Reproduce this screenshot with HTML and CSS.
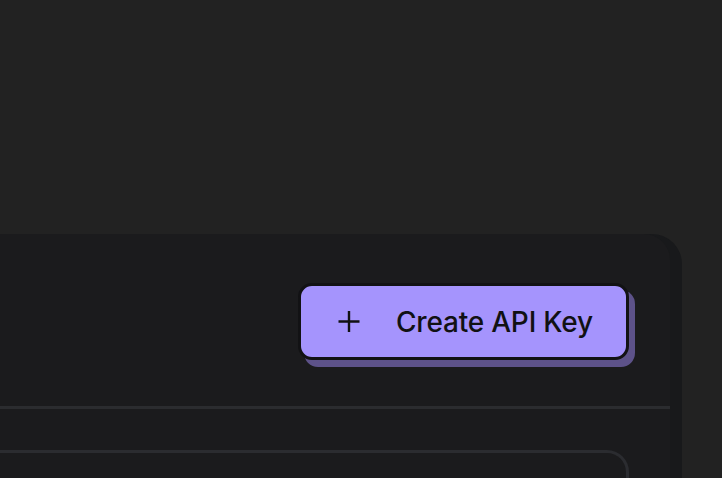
FILE: index.html
```html
<!DOCTYPE html>
<html>
<head>
<meta charset="utf-8">
<link rel="stylesheet" href="styles.css">
</head>
<body>
<div class="page">
  <div class="card">
    <div class="panel">
      <div class="header">
        <button class="create-btn">
          <svg class="plus" width="22" height="22" viewBox="0 0 22 22"><path d="M11 1V22M0.5 11.5H21.5" stroke="#111" stroke-width="2.4" fill="none"/></svg>
          <span class="label">Create API Key</span>
        </button>
      </div>
      <div class="divider"></div>
      <div class="list">
        <div class="list-box"></div>
      </div>
    </div>
  </div>
</div>
</body>
</html>
```
FILE: styles.css
```css
html, body {
  margin: 0;
  padding: 0;
  background: #222222;
  height: 100%;
  overflow: hidden;
}
.page {
  padding-top: 234px;
  font-family: Inter, "Noto Sans", sans-serif;
}
.card {
  margin-left: -60px;
  width: 742px;
  height: 244px;
  overflow: hidden;
  background: #18191b;
  border-top-right-radius: 30px;
  padding-right: 12px;
  box-sizing: border-box;
}
.panel {
  background: #1b1b1d;
  height: 100%;
  border-top-right-radius: 26px;
  border-top-left-radius: 30px;
}
.header {
  display: flex;
  justify-content: flex-end;
  padding: 49px 41px 0 0;
  height: 126px;
  box-sizing: border-box;
}
.create-btn {
  display: flex;
  align-items: center;
  box-sizing: border-box;
  width: 331px;
  height: 77px;
  background: #a594fd;
  border: 3px solid #121214;
  border-radius: 14px;
  box-shadow: 6px 7px 0 #5d5289;
  padding: 0 0 0 37px;
  font-family: Inter, "Noto Sans", sans-serif;
  font-size: 28px;
  font-weight: 500;
  color: #111113;
  cursor: pointer;
}
.plus {
  flex: none;
  margin-top: -1px;
}
.label {
  margin-left: 36px;
  letter-spacing: -0.2px;
}
.divider {
  height: 3px;
  background: #2b2c2f;
  margin-top: 46px;
}
.list {
  padding: 41px 41px 0 0;
}
.list-box {
  height: 40px;
  border: 3px solid #2b2c30;
  border-left: none;
  border-top-right-radius: 22px;
}
```
